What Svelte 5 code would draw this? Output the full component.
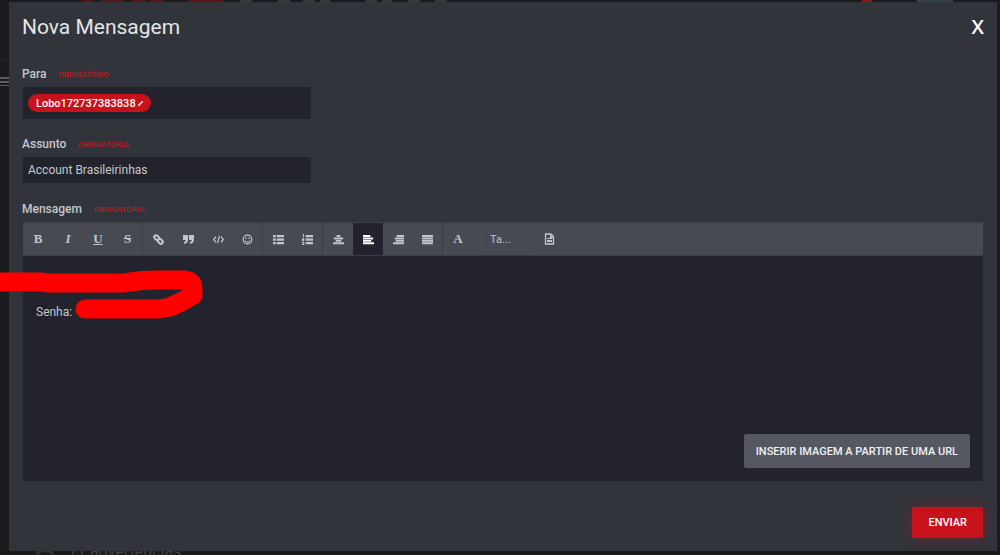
<script lang="ts">
	type Tool = { id: string; label: string; letter?: string; path?: string };

	const groups: Tool[][] = [
		[
			{ id: 'bold', label: 'Negrito', letter: 'B' },
			{ id: 'italic', label: 'Itálico', letter: 'I' },
			{ id: 'underline', label: 'Sublinhado', letter: 'U' },
			{ id: 'strike', label: 'Riscado', letter: 'S' }
		],
		[
			{ id: 'link', label: 'Link' },
			{ id: 'quote', label: 'Citação' },
			{ id: 'code', label: 'Código' },
			{ id: 'emoji', label: 'Emoticon' }
		],
		[
			{ id: 'bullets', label: 'Lista', path: 'M0 1h3v2.500H0zM0 4.800h3v2.500H0zM0 8.600h3v2.500H0zM4 1h8v2.500H4zM4 4.800h8v2.500H4zM4 8.600h8v2.500H4z' },
			{ id: 'numbers', label: 'Lista numerada', path: 'M1 0h1.300v3.500H1zM0 4.500h2.500v1.500L1.500 7h1v.8H0zM0 8.700h2.500V12H0v-1h1.300v-1.300H0zM4 1h8v2.500H4zM4 4.800h8v2.500H4zM4 8.600h8v2.500H4z' }
		],
		[
			{ id: 'center', label: 'Centralizar', path: 'M4 1h4v2.200H4zM1 3.800h10V6H1zM3 6.600h6v1.800H3zM0 9h12v2.200H0z' },
			{ id: 'left', label: 'Alinhar à esquerda', path: 'M0 1h8v2.200H0zM0 3.800h11V6H0zM0 6.600h9v1.800H0zM0 9h12v2.200H0z' },
			{ id: 'right', label: 'Alinhar à direita', path: 'M4 1h8v2.200H4zM2 3.800h10V6H2zM3 6.600h9v1.800H3zM0 9h12v2.200H0z' },
			{ id: 'justify', label: 'Justificar', path: 'M0 1h12v2.200H0zM0 3.800h12V6H0zM0 6.600h12v1.800H0zM0 9h12v2.200H0z' }
		]
	];

	let subject = $state('Account Brasileirinhas');
	let align = $state('left');
	let open = $state(true);

	function press(id: string) {
		if (['left', 'center', 'right', 'justify'].includes(id)) align = id;
	}
</script>

<div class="page">
	<div class="backdrop" aria-hidden="true">
		<svg class="top-strip" width="1000" height="3" viewBox="0 0 1000 3">
			<path d="M82 0h12v2H82zM101 0h23v2h-23zM132 0h13v2h-13zM150 0h13v2h-13zM189 0h34v2h-34z" fill="#5a151a" />
			<path d="M240 0h12v2h-12zM278 0h12v2h-12zM303 0h12v2h-12zM320 0h10v2h-10zM365 0h12v2h-12zM382 0h10v2h-10zM408 0h12v2h-12zM435 0h12v2h-12z" fill="#3a3939" />
			<path d="M862 0h10v2h-10z" fill="#8a1a1d" />
			<path d="M917 0h36v2h-36z" fill="#34424b" />
		</svg>
		<span class="rule"></span>
		<svg class="menu" width="9" height="10" viewBox="0 0 9 10">
			<path d="M0 0h9v2H0zM0 4h9v2H0zM0 8h9v1H0z" fill="#5c5c5c" />
		</svg>
		<p class="warnings">
			<svg width="22" height="22" viewBox="0 0 22 22"><circle cx="11" cy="11" r="9" /></svg>
			<span>11 advertências</span>
		</p>
	</div>

	{#if open}
		<div class="dialog" role="dialog" aria-labelledby="dialog-title">
			<header>
				<h1 id="dialog-title">Nova Mensagem</h1>
				<button class="close" aria-label="Fechar" onclick={() => (open = false)}>X</button>
			</header>

			<form onsubmit={(e) => e.preventDefault()}>
				<div class="field">
					<div class="label"><label for="to">Para</label> <em>Obrigatório</em></div>
					<div class="tokens">
						<span class="token">
							Lobo172737383838
							<button type="button" aria-label="Remover">
								<svg width="5" height="5" viewBox="0 0 5 5"><path d="M0 5L5 0" /></svg>
							</button>
						</span>
						<input id="to" type="text" />
					</div>
				</div>

				<div class="field">
					<div class="label"><label for="subject">Assunto</label> <em>Obrigatório</em></div>
					<input id="subject" class="text" type="text" bind:value={subject} />
				</div>

				<div class="message">
					<div class="label" id="message-label"><span>Mensagem</span> <em>Obrigatório</em></div>
					<div class="editor">
						<div class="toolbar" role="toolbar">
							{#each groups as group}
								<div class="group">
									{#each group as tool}
										<button
											type="button"
											class="tool {tool.id}"
											class:active={align === tool.id}
											aria-label={tool.label}
											onclick={() => press(tool.id)}
										>
											{#if tool.letter}
												{tool.letter}
											{:else}
												<svg width="11" height="11" viewBox="0 0 12 12">
													{#if tool.id === 'link'}
														<g fill="none" stroke="currentColor" stroke-width="2.200">
															<rect x="1" y="2" width="6" height="4" rx="2" transform="rotate(45 4 4)" />
															<rect x="5" y="6" width="6" height="4" rx="2" transform="rotate(45 8 8)" />
														</g>
													{:else if tool.id === 'quote'}
														<path d="M0 1h5.500V6c0 2.800-1.500 4.700-4.500 4.700V8.600C2.300 8.600 3 8 3 6.500H0zM6.500 1H12V6c0 2.800-1.500 4.700-4.500 4.700V8.600c1.300 0 2-.6 2-2.100h-3z" />
													{:else if tool.id === 'code'}
														<path d="M3.300 3L.6 6l2.700 3M8.700 3l2.700 3-2.700 3M7.100 2L4.900 10" fill="none" stroke="currentColor" stroke-width="1.300" />
													{:else if tool.id === 'emoji'}
														<g fill="none" stroke="currentColor" stroke-width="1.300">
															<circle cx="6" cy="6" r="4.700" />
															<path d="M3.400 7.200c.8 2 4.400 2 5.200 0" />
														</g>
														<circle cx="4.300" cy="4.600" r=".9" />
														<circle cx="7.700" cy="4.600" r=".9" />
													{:else}
														<path d={tool.path} />
													{/if}
												</svg>
											{/if}
										</button>
									{/each}
								</div>
							{/each}
							<button type="button" class="tool" aria-label="Cor do texto">A</button>
							<select aria-label="Tamanho">
								<option>Ta...</option>
							</select>
							<button type="button" class="tool" aria-label="Visualizar">
								<svg width="11" height="12" viewBox="0 0 11 12">
									<path d="M1.500 1h5.500l2.500 2.500V11h-8z" fill="none" stroke="currentColor" stroke-width="1.300" />
									<path d="M6 1h1.500v2.500h2V5H6zM3 5h5v1H3zM3 7h5v2H3z" />
								</svg>
							</button>
						</div>

						<div class="body" role="textbox" tabindex="0" aria-multiline="true" aria-labelledby="message-label">
							<p>Senha:</p>
							<svg class="scribble" width="214" height="60" viewBox="0 0 214 60">
								<path d="M-12 16H43L47 17H124L143 14.500L158 14H184Q194 14 194 22V29L184 35L171 41L160 43L108 43L86 43" />
							</svg>
						</div>

						<div class="attach">
							<button type="button">INSERIR IMAGEM A PARTIR DE UMA URL</button>
						</div>
					</div>
				</div>

				<footer>
					<button type="submit">ENVIAR</button>
				</footer>
			</form>
		</div>
	{/if}
</div>

<style>
	:global(body) {
		background: #1b1a1c;
	}

	.page {
		position: relative;
		min-height: 100vh;
		box-sizing: border-box;
		padding: 2px 3px 4px 9px;
		overflow: hidden;
		font-family: Roboto, 'Liberation Sans', sans-serif;
		font-size: 12px;
		color: #c6c7c9;
	}

	.page * {
		box-sizing: border-box;
	}

	button,
	input,
	select {
		font: inherit;
		color: inherit;
		border: 0;
		margin: 0;
		padding: 0;
		background: none;
	}

	button {
		cursor: pointer;
	}

	.backdrop {
		position: absolute;
		inset: 0;
	}

	.top-strip {
		position: absolute;
		top: 0;
		left: 0;
	}

	.rule {
		position: absolute;
		top: 59px;
		left: 0;
		width: 9px;
		height: 1px;
		background: #4a171b;
	}

	.menu {
		position: absolute;
		top: 77px;
		left: 0;
	}

	.warnings {
		position: absolute;
		bottom: 0;
		left: 34px;
		margin: 0;
		display: flex;
		gap: 12px;
		height: 10px;
		font-size: 16px;
		line-height: 14px;
		color: #46433f;
	}

	.warnings svg {
		margin-top: 3px;
		fill: none;
		stroke: #34312f;
		stroke-width: 3;
	}

	.dialog {
		position: relative;
		background: #31343b;
	}

	header {
		display: flex;
		align-items: center;
		justify-content: space-between;
		height: 47px;
		margin: 0 13px;
		padding-top: 4px;
		border-bottom: 1px solid #2d3036;
	}

	h1 {
		margin: 0;
		font-size: 21px;
		font-weight: 400;
		line-height: 28px;
		color: #e4e5e6;
	}

	.close {
		font-family: 'Open Sans', sans-serif;
		font-size: 20px;
		font-weight: 600;
		line-height: 26px;
		color: #fff;
	}

	form {
		padding: 15px 14px 13px;
	}

	.field {
		width: 30%;
		min-width: 260px;
		margin-bottom: 15px;
	}

	.message {
		margin-top: 16px;
	}

	.label {
		display: flex;
		align-items: center;
		gap: 12px;
		height: 18px;
		margin: 0 -1px 5px;
		padding-top: 2px;
		font-size: 12px;
		font-weight: 500;
		line-height: 16px;
	}

	.label em {
		font-size: 8px;
		font-style: normal;
		font-weight: 400;
		text-transform: uppercase;
		line-height: 10px;
		padding-top: 2px;
		color: #cc1a22;
	}

	.tokens {
		display: flex;
		align-items: center;
		height: 32px;
		padding: 0 5px;
		background: #22232c;
	}

	.tokens input {
		flex: 1;
		min-width: 0;
	}

	.token {
		display: flex;
		align-items: center;
		gap: 2px;
		height: 18px;
		padding: 0 8px;
		border-radius: 9px;
		background: #c8121b;
		color: #fff;
		font-size: 11px;
		font-weight: 500;
	}

	.token button {
		display: flex;
	}

	.token path {
		stroke: #fff;
		stroke-width: 1.5;
	}

	.text {
		display: block;
		width: 100%;
		height: 26px;
		padding: 0 5px;
		background: #22232c;
	}

	.editor {
		background: #22232c;
	}

	.toolbar {
		display: flex;
		align-items: center;
		height: 34px;
		background: #484a51;
		border: solid #3b3d44;
		border-width: 1px 0;
	}

	.group {
		display: flex;
		height: 100%;
		border-right: 1px solid #3b3d44;
	}

	.tool {
		display: flex;
		align-items: center;
		justify-content: center;
		width: 30px;
		height: 100%;
		font-family: 'Liberation Serif', serif;
		font-size: 13px;
		font-weight: 700;
		color: #c4c5c8;
	}

	.group .tool:last-child {
		width: 29px;
	}

	.tool svg {
		fill: currentColor;
	}

	.italic {
		font-style: italic;
	}

	.underline {
		text-decoration: underline;
	}

	.strike {
		text-decoration: line-through;
	}

	.active {
		background: #22232c;
		color: #fff;
	}

	select {
		appearance: none;
		width: 50px;
		height: 22px;
		margin: 0 3px 0 8px;
		padding: 0 8px;
		border: 1px solid #4e5057;
		border-radius: 2px;
		font-size: 11px;
	}

	.body {
		position: relative;
		min-height: 178px;
		padding: 47px 13px 0;
		outline: none;
	}

	.body p {
		margin: 0;
		line-height: 18px;
	}

	.scribble {
		position: absolute;
		top: 10px;
		left: -24px;
		fill: none;
		stroke: #f00;
		stroke-width: 19;
		stroke-linecap: round;
		stroke-linejoin: round;
		pointer-events: none;
	}

	.attach {
		display: flex;
		justify-content: flex-end;
		padding: 0 13px 13px;
	}

	.attach button {
		height: 34px;
		padding: 0 12px;
		border-radius: 2px;
		background: #565861;
		font-size: 11px;
		font-weight: 500;
		color: #f0f0f2;
	}

	footer {
		display: flex;
		justify-content: flex-end;
		margin-top: 26px;
	}

	footer button {
		height: 31px;
		padding: 0 16px;
		background: #c8121b;
		box-shadow: 0 0 14px #c8121b66;
		font-size: 11px;
		font-weight: 500;
		color: #fff;
	}
</style>
